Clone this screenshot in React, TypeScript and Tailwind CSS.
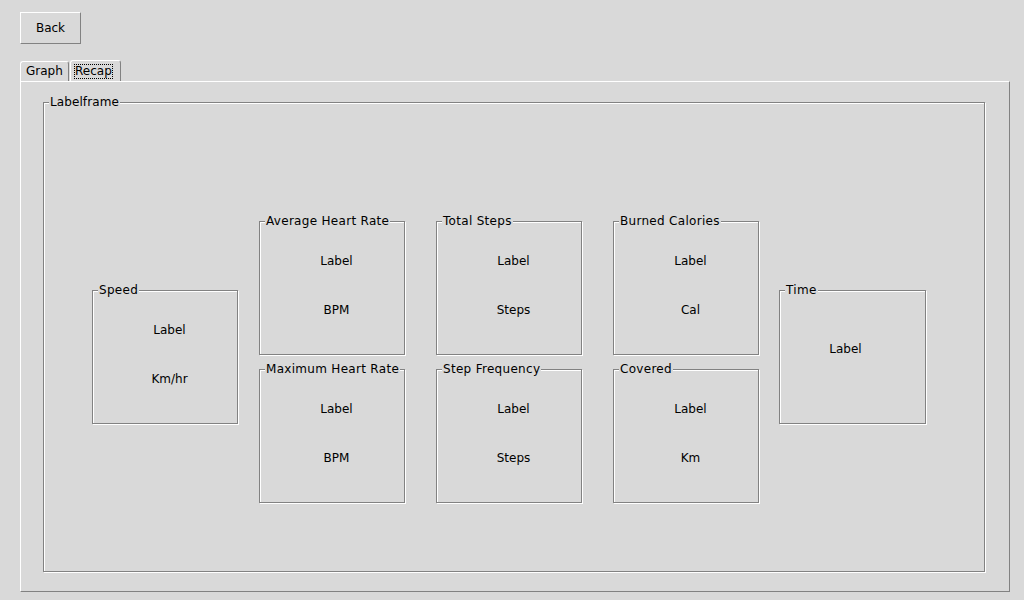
import React from 'react';

const groove = 'border border-[#828282] shadow-[1px_1px_0_#ffffff,inset_1px_1px_0_#ffffff]';

interface StatBoxProps {
  title: string;
  lines: string[];
  className?: string;
  bodyClass?: string;
}

const StatBox = ({ title, lines, className = 'w-[146px]', bodyClass = 'pt-[32px] pl-[9px] gap-[35px]' }: StatBoxProps) => {
  return <div className={`relative h-[134px] ${groove} ${className}`}>
      <span className="absolute top-[-8px] left-[5px] px-[1px] leading-[14px] tracking-[0.3px] bg-[#d9d9d9] whitespace-nowrap">
        {title}
      </span>
      <div className={`flex flex-col items-center leading-[14px] ${bodyClass}`}>
        {lines.map(line => <span key={line}>{line}</span>)}
      </div>
    </div>;
};

const App = () => {
  return <div className="w-[1024px] h-[600px] bg-[#d9d9d9] pt-[12px] pl-[20px] text-[12px] text-black font-['DejaVu_Sans',sans-serif]">
      <button className="w-[61px] h-[32px] border border-t-white border-l-white border-r-[#828282] border-b-[#828282] flex items-center justify-center pb-[1px]">
        Back
      </button>

      <div className="flex items-end mt-[16px] h-[21px]">
        <div className="w-[49px] h-[20px] border border-b-0 border-t-white border-l-white border-r-[#828282] rounded-t-[3px] flex items-center pl-[5px] pb-[1px]">
          Graph
        </div>
        <div className="ml-[1px] w-[51px] h-[21px] border border-b-0 border-t-white border-l-white border-r-[#828282] rounded-t-[3px] flex items-center pl-[3px]">
          <span className="px-[1px] leading-[15px] outline outline-1 outline-dotted outline-black -outline-offset-1">Recap</span>
        </div>
      </div>

      <div className="w-[990px] h-[511px] border border-t-white border-l-white border-r-[#828282] border-b-[#828282] pt-[20px] pl-[22px]">
        <div className={`relative w-[942px] h-[470px] ${groove}`}>
          <span className="absolute top-[-8px] left-[5px] px-[1px] leading-[14px] tracking-[0.1px] bg-[#d9d9d9]">Labelframe</span>
          <div className="flex items-start pt-[118px] pl-[48px]">
            <StatBox title="Speed" lines={['Label', 'Km/hr']} className="w-[146px] mt-[69px]" />
            <div className="flex flex-col gap-[14px] ml-[21px]">
              <StatBox title="Average Heart Rate" lines={['Label', 'BPM']} />
              <StatBox title="Maximum Heart Rate" lines={['Label', 'BPM']} />
            </div>
            <div className="flex flex-col gap-[14px] ml-[31px]">
              <StatBox title="Total Steps" lines={['Label', 'Steps']} />
              <StatBox title="Step Frequency" lines={['Label', 'Steps']} />
            </div>
            <div className="flex flex-col gap-[14px] ml-[31px]">
              <StatBox title="Burned Calories" lines={['Label', 'Cal']} />
              <StatBox title="Covered" lines={['Label', 'Km']} />
            </div>
            <StatBox title="Time" lines={['Label']} className="w-[147px] mt-[69px] ml-[20px]" bodyClass="pt-[51px] pr-[14px]" />
          </div>
        </div>
      </div>
    </div>;
};

export default App;
